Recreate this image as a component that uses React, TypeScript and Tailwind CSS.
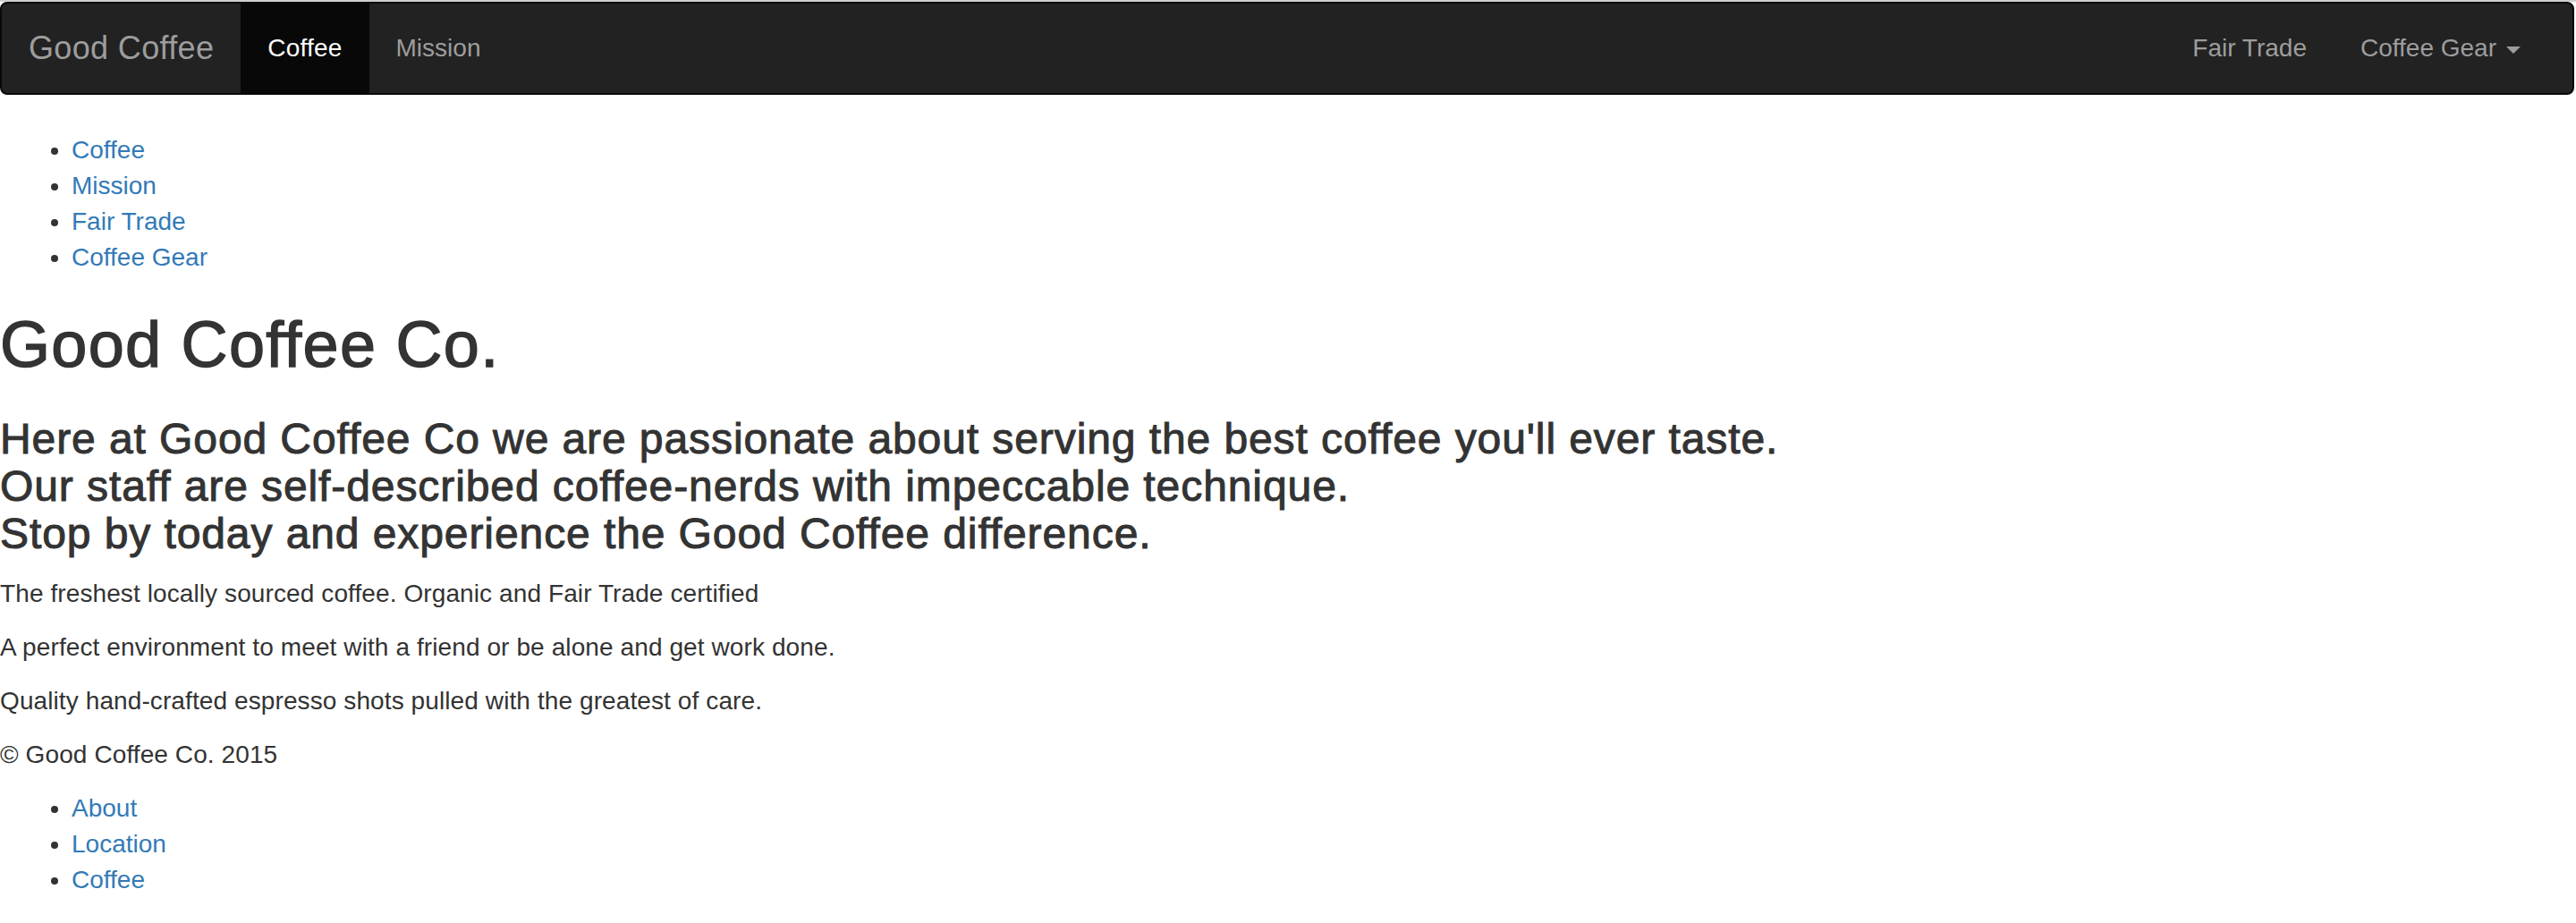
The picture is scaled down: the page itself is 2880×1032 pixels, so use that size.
import React from "react";

const font = { fontFamily: '"Liberation Sans", Arial, Helvetica, sans-serif' };

export default function App() {
  return (
    <div className="bg-white text-[#333333] w-[2880px] min-h-[1032px]" style={font}>
      <div className="h-[2px] bg-[#cfcfcf]" />
      <nav className="mr-[2px] mb-[40px] h-[104px] rounded-[8px] border-[2px] border-[#080808] bg-[#222222] flex items-stretch justify-between pr-[28px]">
        <div className="flex items-stretch">
          <a className="flex items-center px-[30px] text-[36px] leading-[40px] tracking-[0.35px] text-[#9d9d9d]">Good Coffee</a>
          <a className="flex items-center px-[30px] text-[28px] leading-[40px] tracking-[0.2px] text-white bg-[#080808]">Coffee</a>
          <a className="flex items-center px-[30px] text-[28px] leading-[40px] text-[#9d9d9d]">Mission</a>
        </div>
        <div className="flex items-stretch">
          <a className="flex items-center px-[30px] text-[28px] leading-[40px] text-[#9d9d9d]">Fair Trade</a>
          <a className="flex items-center px-[30px] text-[28px] leading-[40px] text-[#9d9d9d]">
            Coffee Gear
            <span className="ml-[11px] mt-[4px] inline-block w-0 h-0 border-t-[8px] border-t-[#9d9d9d] border-l-[8px] border-l-transparent border-r-[8px] border-r-transparent" />
          </a>
        </div>
      </nav>

      <ul className="list-disc pl-[80px] mb-[20px] pt-[2px] text-[28px] leading-[40px]">
        <li><a className="text-[#337ab7]">Coffee</a></li>
        <li><a className="text-[#337ab7]">Mission</a></li>
        <li><a className="text-[#337ab7]">Fair Trade</a></li>
        <li><a className="text-[#337ab7]">Coffee Gear</a></li>
      </ul>

      <h1 className="mt-[38px] mb-[20px] text-[72px] leading-[79.2px] tracking-[0.018em] [-webkit-text-stroke:1.4px_#333333]">Good Coffee Co.</h1>

      <h3 className="mt-[40px] mb-[20px] text-[48px] leading-[52.8px] tracking-[0.019em] [-webkit-text-stroke:1px_#333333]">
        Here at Good Coffee Co we are passionate about serving the best coffee you'll ever taste.
        <br />
        Our staff are self-described coffee-nerds with impeccable technique.
        <br />
        Stop by today and experience the Good Coffee difference.
      </h3>

      <p className="mb-[20px] text-[28px] leading-[40px] tracking-[0.1px]">The freshest locally sourced coffee. Organic and Fair Trade certified</p>
      <p className="mb-[20px] text-[28px] leading-[40px] tracking-[0.1px]">A perfect environment to meet with a friend or be alone and get work done.</p>
      <p className="mb-[20px] text-[28px] leading-[40px] tracking-[0.1px]">Quality hand-crafted espresso shots pulled with the greatest of care.</p>

      <footer>
        <p className="mb-[20px] text-[28px] leading-[40px] tracking-[0.1px]">© Good Coffee Co. 2015</p>
        <ul className="list-disc pl-[80px] mb-[20px] text-[28px] leading-[40px]">
          <li><a className="text-[#337ab7]">About</a></li>
          <li><a className="text-[#337ab7]">Location</a></li>
          <li><a className="text-[#337ab7]">Coffee</a></li>
        </ul>
      </footer>
    </div>
  );
}
